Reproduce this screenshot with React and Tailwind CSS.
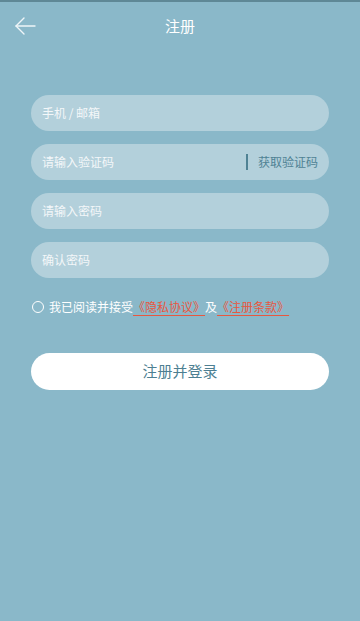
import React from 'react';

const font = { fontFamily: '"Noto Sans CJK SC", "Noto Sans", sans-serif' };

function Field({ placeholder, children }) {
  return (
    <div className="h-[36px] rounded-full bg-[#b3d0db] flex items-center pl-[11px] pr-[11px]">
      <span className="flex-1 text-[12px] text-[#f3f7f9]">{placeholder}</span>
      {children}
    </div>
  );
}

export default function App() {
  return (
    <div className="w-[360px] h-[621px] bg-[#8ab8c9] border-t-2 border-[#5f8896] flex flex-col" style={font}>
      {/* Header */}
      <div className="h-[48px] relative flex items-center justify-center">
        <button className="absolute left-[12px] top-[12px] p-[2px]">
          <svg width="22" height="20" viewBox="0 0 22 20" fill="none" stroke="#eef5f8" strokeWidth="1.4" strokeLinecap="round" strokeLinejoin="round">
            <path d="M21 10H2" />
            <path d="M10 2L2 10l8 8" />
          </svg>
        </button>
        <span className="text-white text-[15px]">注册</span>
      </div>

      {/* Form */}
      <div className="px-[31px] pt-[45px] flex flex-col gap-[13px]">
        <Field placeholder="手机 / 邮箱" />
        <Field placeholder="请输入验证码">
          <span className="w-[2px] h-[16px] bg-[#4f8294] mr-[10px]" />
          <span className="text-[12px] text-[#4f8294]">获取验证码</span>
        </Field>
        <Field placeholder="请输入密码" />
        <Field placeholder="确认密码" />
      </div>

      <div className="px-[32px] pt-[20px] flex items-center text-[12px] text-white">
        <span className="w-[12px] h-[12px] rounded-full border-[1.5px] border-white mr-[5px]" />
        <span>我已阅读并接受</span>
        <span className="text-[#e8573f] underline underline-offset-[3px] decoration-[#e8573f]">《隐私协议》</span>
        <span>及</span>
        <span className="text-[#e8573f] underline underline-offset-[3px] decoration-[#e8573f]">《注册条款》</span>
      </div>

      <div className="px-[31px] pt-[37px]">
        <button className="w-full h-[37px] rounded-full bg-white text-[15px] text-[#4d7f92]">注册并登录</button>
      </div>
    </div>
  );
}
